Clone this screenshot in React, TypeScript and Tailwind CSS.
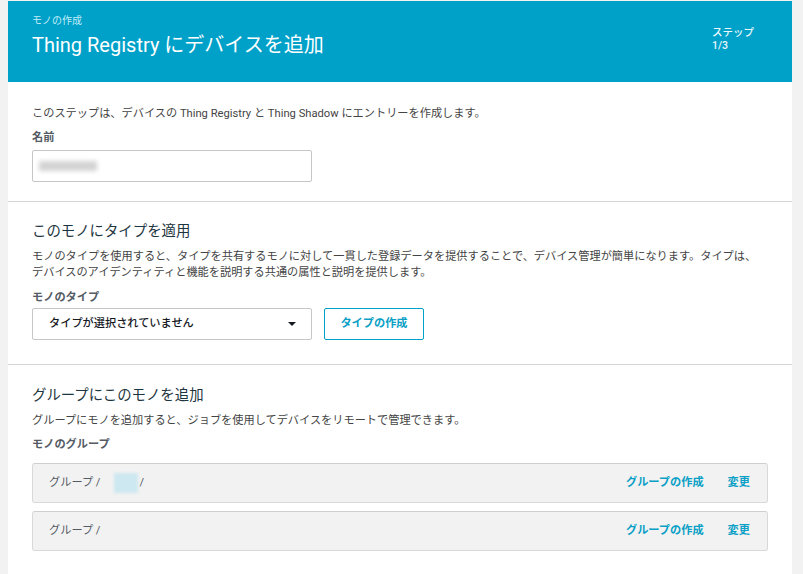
import React from 'react';

const font = { fontFamily: "Roboto, 'Noto Sans CJK JP', sans-serif" };

function GroupRow({ blurred }: { blurred?: boolean }) {
  return (
    <div className="flex h-10 items-center justify-between rounded-[3px] border border-[#d9d9d9] border-t-[#cfcfcf] bg-[#f2f2f2] pl-4 pr-[17px]">
      <div className="flex items-center text-[11.2px] text-[#545b64]">
        <span>グループ /</span>
        {blurred && (
          <>
            <span className="ml-[14px] h-[20px] w-[24px] bg-[#cde8f0] blur-[1.5px]" />
            <span className="ml-px">/</span>
          </>
        )}
      </div>
      <div className="flex items-center gap-[24px] text-[11.2px] font-bold text-[#0a9fc6]">
        <span>グループの作成</span>
        <span>変更</span>
      </div>
    </div>
  );
}

export default function App() {
  return (
    <div className="min-h-screen bg-[#f2f2f2] pt-px pl-2 pr-[11px]" style={font}>
      <div className="bg-white">
        <div className="flex h-[81px] justify-between bg-[#00a1c9] pl-6 pr-[38px]">
          <div>
            <div className="mt-[13px] text-[10px] leading-[14px] text-[#c2ecf8]">モノの作成</div>
            <h1 className="mt-[3px] text-[20px] leading-[28px] text-white">Thing Registry にデバイスを追加</h1>
          </div>
          <div className="mt-[25px] text-[10.5px] font-medium leading-[13px] text-[#eaf8fc]">
            <div>ステップ</div>
            <div>1/3</div>
          </div>
        </div>

        <section className="border-b border-[#d5d5d5] px-6 pt-[24px] pb-[19px]">
          <p className="text-[11.2px] leading-4 text-[#444]">
            このステップは、デバイスの Thing Registry と Thing Shadow にエントリーを作成します。
          </p>
          <div className="mt-2 text-[11.2px] font-bold leading-4 text-[#545b64]">名前</div>
          <div className="mt-1 flex h-8 w-[280px] items-center rounded-[2px] border border-[#c6c6c6] px-[6px]">
            <span className="h-[10px] w-[58px] bg-[#d4d4d4] blur-[2px]" />
          </div>
        </section>

        <section className="border-b border-[#d5d5d5] px-6 pt-[20px] pb-[24px]">
          <h2 className="text-[14.4px] leading-5 text-[#1d3540]">このモノにタイプを適用</h2>
          <p className="mt-[7px] text-[11.2px] leading-4 text-[#444]">
            モノのタイプを使用すると、タイプを共有するモノに対して一貫した登録データを提供することで、デバイス管理が簡単になります。タイプは、
            <br />
            デバイスのアイデンティティと機能を説明する共通の属性と説明を提供します。
          </p>
          <div className="mt-[9px] text-[11.2px] font-bold leading-4 text-[#545b64]">モノのタイプ</div>
          <div className="mt-[2px] flex items-center gap-3">
            <div className="flex h-8 w-[280px] items-center justify-between rounded-[2px] border border-[#c6c6c6] pl-4 pr-[15px]">
              <span className="text-[11.2px] font-medium text-[#16191f]">タイプが選択されていません</span>
              <span className="h-0 w-0 border-x-[4px] border-t-[4px] border-x-transparent border-t-[#16191f]" />
            </div>
            <button className="h-8 w-[100px] rounded-[2px] border border-[#00a1c9] text-[11.2px] font-bold text-[#0a9fc6]">
              タイプの作成
            </button>
          </div>
        </section>

        <section className="px-6 pt-[21px] pb-6">
          <h2 className="text-[14.4px] leading-5 text-[#1d3540]">グループにこのモノを追加</h2>
          <p className="mt-[7px] text-[11.2px] leading-4 text-[#444]">
            グループにモノを追加すると、ジョブを使用してデバイスをリモートで管理できます。
          </p>
          <div className="mt-2 text-[11.2px] font-bold leading-4 text-[#545b64]">モノのグループ</div>
          <div className="mt-[10px] flex flex-col gap-2">
            <GroupRow blurred />
            <GroupRow />
          </div>
        </section>
      </div>
    </div>
  );
}
